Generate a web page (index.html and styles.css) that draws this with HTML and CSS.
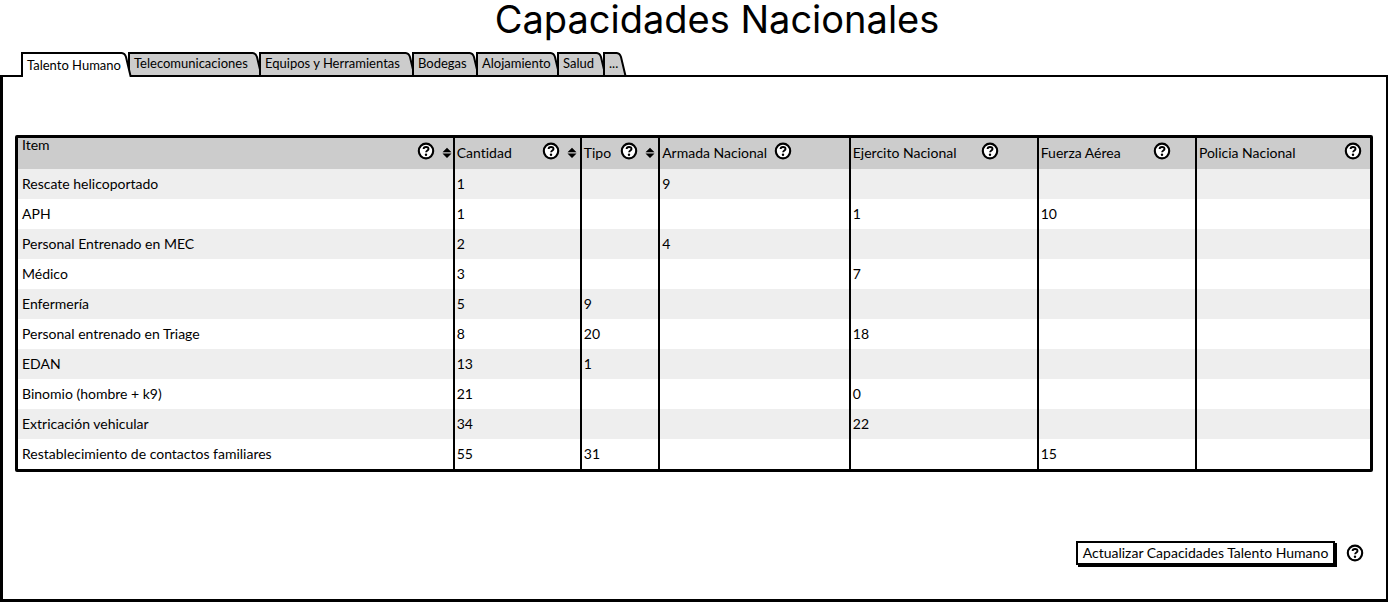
FILE: index.html
```html
<!DOCTYPE html>
<html lang="es">
<head>
<meta charset="utf-8">
<title>Capacidades Nacionales</title>
<link rel="stylesheet" href="styles.css">
</head>
<body>
<svg class="defs" width="0" height="0" aria-hidden="true">
  <symbol id="help" viewBox="0 0 18 18">
    <ellipse cx="9" cy="9" rx="7.2" ry="7.4" fill="#fff" stroke="#000" stroke-width="2.1"/>
    <path d="M6.6 7.1C6.6 4.3 11.5 4.2 11.5 6.9C11.5 8.4 9.2 8.5 9.1 10.3" fill="none" stroke="#000" stroke-width="1.9"/>
    <circle cx="9" cy="12.8" r="1.2"/>
  </symbol>
  <symbol id="sort" viewBox="0 0 10 12">
    <path d="M5 .8L9.5 5.2H.5ZM.5 6.6H9.5L5 11Z"/>
  </symbol>
  <symbol id="slope" viewBox="0 0 11 26">
    <path d="M0 1C3 .8 4 2 5 5L10 26H0Z" fill="currentColor"/>
    <path d="M0 1C3 .8 4 2 5 5L10 26" fill="none" stroke="#000" stroke-width="2"/>
  </symbol>
</svg>
<main class="page">
  <h1 class="title">Capacidades Nacionales</h1>
  <div class="tabs" role="tablist">
    <button class="tab tab-active w-talento" role="tab" aria-selected="true"><span class="tab-label">Talento Humano</span><svg class="slope"><use href="#slope"/></svg></button>
    <button class="tab w-telecom" role="tab"><span class="tab-label">Telecomunicaciones</span><svg class="slope"><use href="#slope"/></svg></button>
    <button class="tab w-equipos" role="tab"><span class="tab-label">Equipos y Herramientas</span><svg class="slope"><use href="#slope"/></svg></button>
    <button class="tab w-bodegas" role="tab"><span class="tab-label">Bodegas</span><svg class="slope"><use href="#slope"/></svg></button>
    <button class="tab w-alojamiento" role="tab"><span class="tab-label">Alojamiento</span><svg class="slope"><use href="#slope"/></svg></button>
    <button class="tab w-salud" role="tab"><span class="tab-label">Salud</span><svg class="slope"><use href="#slope"/></svg></button>
    <button class="tab w-more" role="tab"><span class="tab-label">...</span><svg class="slope"><use href="#slope"/></svg></button>
  </div>
  <section class="panel">
    <table class="grid">
      <colgroup><col class="c-item"><col class="c-cantidad"><col class="c-tipo"><col class="c-armada"><col class="c-ejercito"><col class="c-fuerza"><col></colgroup>
      <thead>
        <tr>
          <th><div class="head head-top"><span>Item</span><svg class="help"><use href="#help"/></svg><svg class="sort"><use href="#sort"/></svg></div></th>
          <th><div class="head head-sort"><span>Cantidad</span><svg class="help"><use href="#help"/></svg><svg class="sort"><use href="#sort"/></svg></div></th>
          <th><div class="head head-sort"><span>Tipo</span><svg class="help"><use href="#help"/></svg><svg class="sort"><use href="#sort"/></svg></div></th>
          <th><div class="head head-armada"><span>Armada Nacional</span><svg class="help"><use href="#help"/></svg></div></th>
          <th><div class="head head-ejercito"><span>Ejercito Nacional</span><svg class="help"><use href="#help"/></svg></div></th>
          <th><div class="head head-fuerza"><span>Fuerza Aérea</span><svg class="help"><use href="#help"/></svg></div></th>
          <th><div class="head head-policia"><span>Policia Nacional</span><svg class="help"><use href="#help"/></svg></div></th>
        </tr>
      </thead>
      <tbody>
        <tr><td>Rescate helicoportado</td><td>1</td><td></td><td>9</td><td></td><td></td><td></td></tr>
        <tr><td>APH</td><td>1</td><td></td><td></td><td>1</td><td>10</td><td></td></tr>
        <tr><td>Personal Entrenado en MEC</td><td>2</td><td></td><td>4</td><td></td><td></td><td></td></tr>
        <tr><td>Médico</td><td>3</td><td></td><td></td><td>7</td><td></td><td></td></tr>
        <tr><td>Enfermería</td><td>5</td><td>9</td><td></td><td></td><td></td><td></td></tr>
        <tr><td>Personal entrenado en Triage</td><td>8</td><td>20</td><td></td><td>18</td><td></td><td></td></tr>
        <tr><td>EDAN</td><td>13</td><td>1</td><td></td><td></td><td></td><td></td></tr>
        <tr><td>Binomio (hombre + k9)</td><td>21</td><td></td><td></td><td>0</td><td></td><td></td></tr>
        <tr><td>Extricación vehicular</td><td>34</td><td></td><td></td><td>22</td><td></td><td></td></tr>
        <tr><td>Restablecimiento de contactos familiares</td><td>55</td><td>31</td><td></td><td></td><td>15</td><td></td></tr>
      </tbody>
    </table>
    <div class="actions">
      <button class="update">Actualizar Capacidades Talento Humano</button>
      <svg class="help"><use href="#help"/></svg>
    </div>
  </section>
</main>
</body>
</html>
```
FILE: styles.css
```css
* { box-sizing: border-box; }
body {
  margin: 0;
  background: #fff;
  color: #000;
  font: 14px/18px Lato, "Open Sans", sans-serif;
  font-variant-ligatures: none;
}
button { font: inherit; color: inherit; cursor: pointer; }
.defs { position: absolute; }
.page { padding-right: 1px; }
.title {
  margin: 0;
  padding-left: 46px;
  height: 52px;
  font-family: Inter, Lato, sans-serif;
  font-size: 38px;
  line-height: 38px;
  font-weight: 400;
  text-align: center;
}

.tabs { display: flex; padding-left: 21px; height: 23px; font-size: 13px; }
.tab {
  display: flex;
  flex: none;
  height: 23px;
  margin: 0 -4px 0 0;
  padding: 0;
  border: 0;
  background: none;
  color: #ccc;
  position: relative;
  overflow: hidden;
}
.tab-label {
  flex: 1;
  height: 100%;
  padding-left: 4px;
  border: 2px solid #000;
  border-width: 2px 0 0 2px;
  background: #ccc;
  color: #000;
  line-height: 19px;
  text-align: left;
  white-space: nowrap;
  /* the label may run over the start of the slanted edge */
  width: 0;
  overflow: visible;
  z-index: 1;
}
.slope { width: 11px; height: 26px; flex: none; }
.tab-active { z-index: 2; height: 25px; color: #fff; }
.tab-active .tab-label { background: #fff; line-height: 22px; }
.w-talento { width: 111px; }
.w-telecom { width: 135px; }
.w-equipos { width: 157px; }
.w-bodegas { width: 68px; }
.w-alojamiento { width: 85px; }
.w-salud { width: 50px; }
.w-more { width: 24px; }

.panel {
  padding: 58px 13px 34px;
  border: 2px solid #000;
  border-width: 2px 2px 3px 3px;
}
.grid {
  width: 100%;
  table-layout: fixed;
  border: 3px solid #000;
  border-radius: 2px;
  border-spacing: 0;
}
.c-item { width: 32.3%; }
.c-cantidad { width: 9.4%; }
.c-tipo { width: 5.8%; }
.c-armada { width: 14.1%; }
.c-ejercito { width: 13.9%; }
.c-fuerza { width: 11.7%; }
.grid th, .grid td {
  padding: 0 0 0 2px;
  border-right: 2px solid #000;
  font-weight: 400;
  text-align: left;
}
.grid th:first-child, .grid td:first-child { padding-left: 4px; }
.grid th:last-child, .grid td:last-child { border-right: 0; }
.grid th { height: 31px; background: #ccc; vertical-align: top; }
.grid td { height: 30px; }
.grid tbody tr:nth-child(odd) { background: #eee; }
.head { display: flex; padding: 4px 1px 0 0; white-space: nowrap; }
.head span { padding-top: 2px; }
.head-top span { margin-top: -8px; }
.help { width: 18px; height: 18px; flex: none; }
.head .help { margin-left: auto; }
.sort { width: 10px; height: 12px; flex: none; margin: 5px 0 0 7px; }
.head-sort { padding-right: 3px; }
.head-armada { padding-right: 57px; }
.head-ejercito { padding-right: 38px; }
.head-fuerza { padding-right: 24px; }
.head-policia { padding-right: 8px; }
.panel { padding-left: 12px; }

.actions {
  display: flex;
  justify-content: flex-end;
  gap: 11px;
  align-items: center;
  padding: 69px 9px 0 0;
}
.update {
  width: 259px;
  height: 24px;
  padding: 0;
  border: 2px solid #000;
  background: #fff;
  box-shadow: 2px 2px 0 #000;
  line-height: 20px;
  white-space: nowrap;
}
```
